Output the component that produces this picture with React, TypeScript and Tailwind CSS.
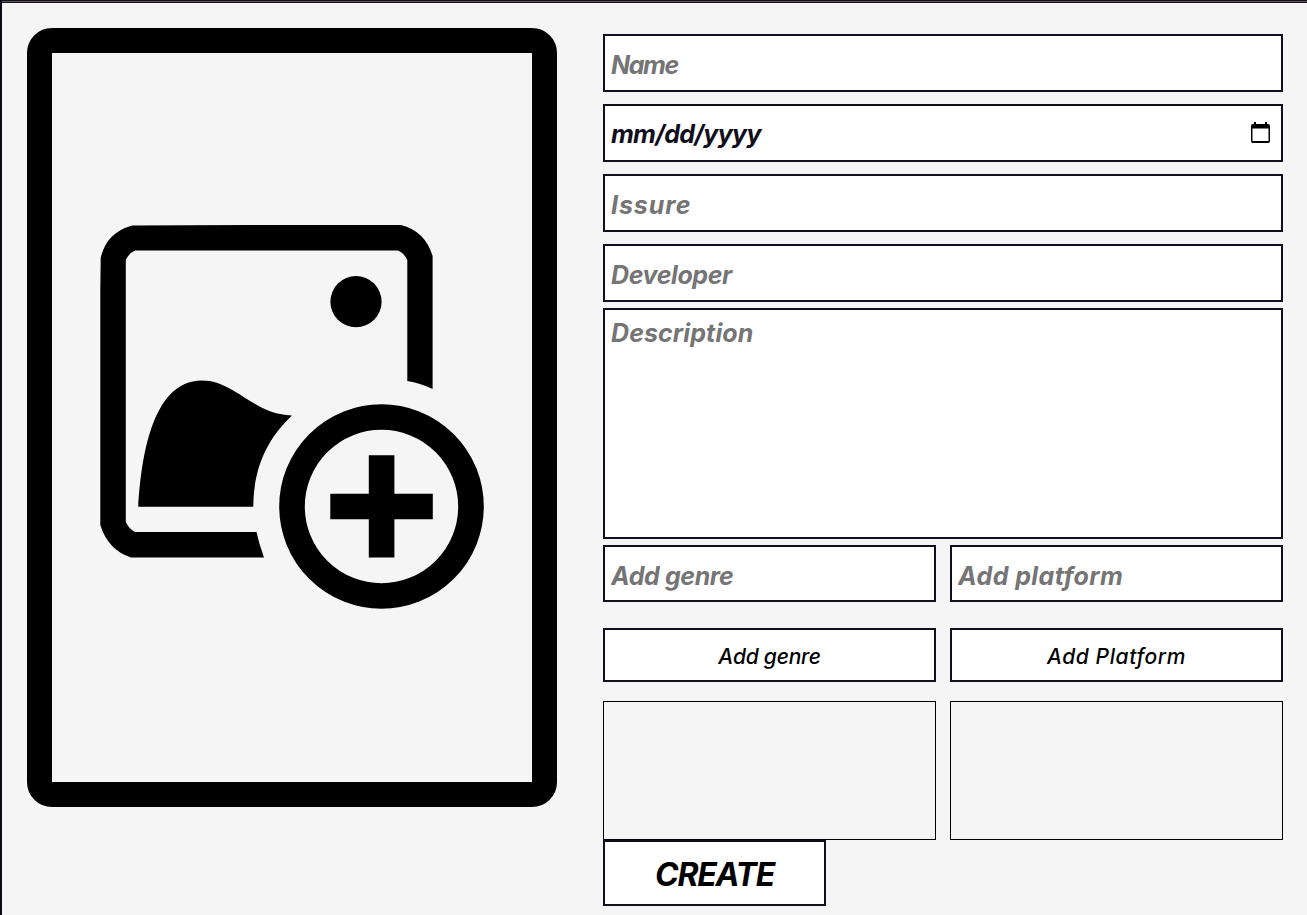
import React from "react";

const field =
  "block w-full border-2 border-[#110e20] bg-white pl-1.5 pr-2 font-['Inter',sans-serif] text-[25px] font-bold italic text-[#110e20] placeholder:text-[#757575] placeholder:opacity-100 outline-none rounded-none";

const button =
  "h-[54px] border-2 border-[#110e20] bg-white pt-1 text-center text-[21px] font-medium italic text-black";

function AddImageIcon() {
  return (
    <svg className="h-full w-full" viewBox="52 53 480 729" aria-hidden="true">
      <path d="M132 225.5L250 225L401 225Q425 231 432.6 256V389Q420 383 407.3 381V260Q404 253 398 250.5H135Q129 253 125.8 260V522Q129 529 135 532H256.5Q259 544 264 557.5H131Q108 550 100.3 525V290L100.7 258Q106 233 132 225.5Z" />
      <circle cx="356" cy="301.7" r="25.6" />
      <path d="M138.3 506.8C141 461 151 380.5 202 380.5C235 380.5 254 415 292 415.5C267 439 253.5 468 253.3 506.8Z" />
      <circle cx="381.5" cy="506.5" r="89.5" fill="none" stroke="black" strokeWidth="25.6" />
      <path d="M368.8 455.3H394.4V493.7H432.8V519.2H394.4V557.6H368.8V519.2H330.3V493.7H368.8Z" />
    </svg>
  );
}

function CalendarIcon() {
  return (
    <svg className="mb-[5px] h-[21px] w-[19px] shrink-0" viewBox="0 0 19 21" aria-hidden="true">
      <path d="M3 0h2v2h9V0h2v2h1a2 2 0 0 1 2 2v15a2 2 0 0 1-2 2H2a2 2 0 0 1-2-2V4a2 2 0 0 1 2-2h1ZM1.5 6.5v12.5h16V6.5Z" fillRule="evenodd" />
    </svg>
  );
}

export default function App() {
  return (
    <div className="h-[915px] w-[1307px] overflow-hidden border-l-2 border-[#0b0b18] bg-[#f5f5f5] font-['Inter',sans-serif]">
      <div className="h-[3px] border-y border-[#151119] bg-[#5c585e]" />
      <main className="flex items-start pl-[25px]">
        <button
          type="button"
          aria-label="Add image"
          className="mt-[25px] h-[779px] w-[530px] shrink-0 rounded-[25px] border-[25px] border-black"
        >
          <AddImageIcon />
        </button>
        <form className="ml-[46px] mt-[31px] w-[680px] shrink-0">
          <div className="flex flex-col gap-3">
            <input className={`${field} h-[58px] pt-1 tracking-[-1.4px]`} placeholder="Name" />
            <label className={`${field} flex h-[58px] items-center justify-between pr-[11px] pt-1 tracking-[-0.7px]`}>
              <span>mm/dd/yyyy</span>
              <CalendarIcon />
            </label>
            <input className={`${field} h-[58px] pt-1 tracking-[0.9px]`} placeholder="Issure" />
            <input className={`${field} h-[58px] pt-1 tracking-[-0.4px]`} placeholder="Developer" />
          </div>
          <textarea
            className={`${field} mt-1.5 h-[231px] resize-none pt-[5px] tracking-[0.1px]`}
            placeholder="Description"
          />
          <div className="mt-1.5 grid grid-cols-2 gap-x-3.5">
            <input className={`${field} h-[57px] pt-1 tracking-[-0.4px]`} placeholder="Add genre" />
            <input className={`${field} h-[57px] pt-1 tracking-[0.4px]`} placeholder="Add platform" />
            <button type="button" className={`${button} mt-[26px]`}>
              <span className="tracking-[-0.2px]">Add genre</span>
            </button>
            <button type="button" className={`${button} mt-[26px]`}>
              <span className="tracking-[0.6px]">Add Platform</span>
            </button>
            <div className="mt-[19px] h-[139px] border border-black" />
            <div className="mt-[19px] h-[139px] border border-black" />
          </div>
          <button
            type="button"
            className="block h-[66px] w-[223px] border-2 border-[#110e20] bg-white pt-1 text-[32px] font-bold italic tracking-[-1.2px] text-black"
          >
            CREATE
          </button>
        </form>
      </main>
    </div>
  );
}
